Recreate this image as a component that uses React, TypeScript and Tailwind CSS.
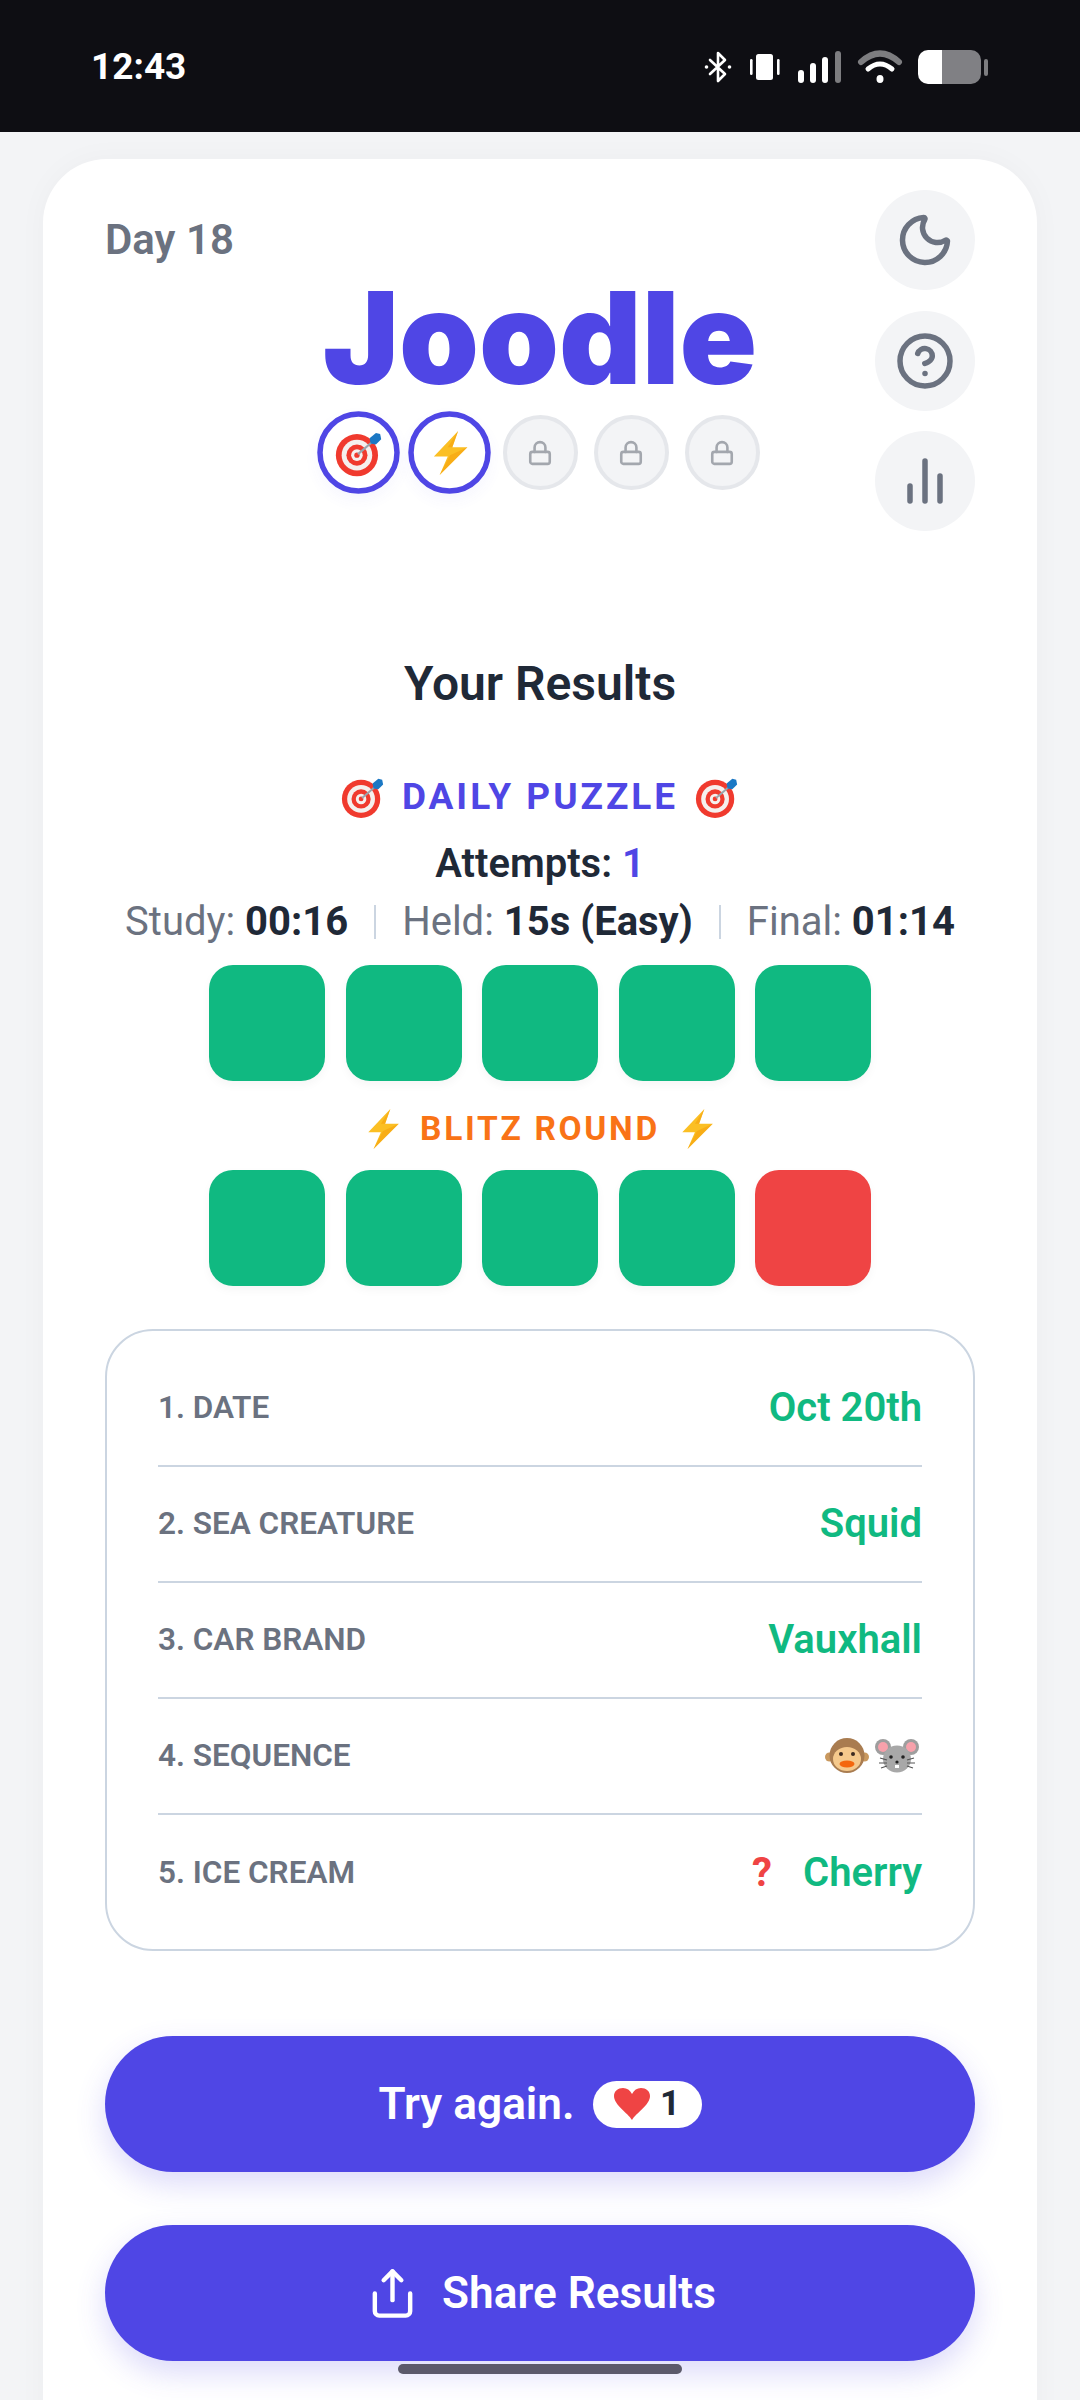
import { Moon, CircleHelp, Lock, Share } from "lucide-react";

const Target = ({ size }: { size: number }) => (
  <svg width={size} height={size} viewBox="0 0 48 48" className="shrink-0">
    <circle cx="22" cy="26" r="20" fill="#f03a2e" />
    <circle cx="22" cy="26" r="14.5" fill="#f5f0ee" />
    <circle cx="22" cy="26" r="10" fill="#f03a2e" />
    <circle cx="22" cy="26" r="5.5" fill="#f5f0ee" />
    <circle cx="22" cy="26" r="2.5" fill="#f03a2e" />
    <path d="M23 25 L37 13" stroke="#9aa5ad" strokeWidth="2" />
    <path d="M34 10 L40 5 L44 6 L45 11 L40 16 L35 15 Z" fill="#1b78c4" />
  </svg>
);

const Bolt = ({ size }: { size: number }) => (
  <svg width={size} height={size} viewBox="0 0 40 40" className="shrink-0">
    <path d="M27 1 L6 23 L18 23 L11 39 L35 15 L22 15 Z" fill="#fbbf24" />
    <path d="M27 1 L18 15 L22 15 Z M35 15 L11 39 L20 22 Z" fill="#f59e0b" opacity="0.55" />
  </svg>
);

const Monkey = () => (
  <svg width="44" height="36" viewBox="0 0 44 36">
    <circle cx="4.5" cy="19" r="4.5" fill="#c9995f" />
    <circle cx="39.5" cy="19" r="4.5" fill="#c9995f" />
    <circle cx="22" cy="17.5" r="17.5" fill="#a97c50" />
    <ellipse cx="22" cy="21" rx="14" ry="12" fill="#f5c98c" />
    <circle cx="16" cy="16" r="2" fill="#3b2a20" />
    <circle cx="28" cy="16" r="2" fill="#3b2a20" />
    <ellipse cx="22" cy="26" rx="7.5" ry="3.4" fill="#f4670e" />
  </svg>
);

const Mouse = () => (
  <svg width="44" height="36" viewBox="0 0 44 36">
    <circle cx="8" cy="9" r="8" fill="#9e9e9e" />
    <circle cx="36" cy="9" r="8" fill="#9e9e9e" />
    <circle cx="8" cy="9" r="5" fill="#f7a1ab" />
    <circle cx="36" cy="9" r="5" fill="#f7a1ab" />
    <ellipse cx="22" cy="21" rx="14" ry="13.5" fill="#a8a8a8" />
    <circle cx="16" cy="19" r="1.8" fill="#222" />
    <circle cx="28" cy="19" r="1.8" fill="#222" />
    <circle cx="22" cy="24" r="1.6" fill="#222" />
    <rect x="20" y="27" width="4" height="3" fill="#fff" />
    <path d="M12 22 L5 20 M12 25 L4 25 M12 28 L6 30 M32 22 L39 20 M32 25 L40 25 M32 28 L38 30" stroke="#555" strokeWidth="1.2" />
  </svg>
);

const StatusIcons = () => (
  <svg width="284" height="34" viewBox="0 0 284 34">
    <g fill="none" stroke="#fff" strokeWidth="2.6" strokeLinejoin="round" strokeLinecap="round">
      <path d="M6 10 L21 24 L14 31 L14 3 L21 10 L6 24" />
    </g>
    <circle cx="2.5" cy="17" r="1.8" fill="#fff" />
    <circle cx="25.5" cy="17" r="1.8" fill="#fff" />
    <rect x="52" y="4" width="17" height="26" rx="2.5" fill="#fff" />
    <rect x="46" y="9" width="2.6" height="16" rx="1.3" fill="#fff" />
    <rect x="73" y="9" width="2.6" height="16" rx="1.3" fill="#fff" />
    <rect x="94" y="20" width="6" height="13" rx="3" fill="#fff" />
    <rect x="106" y="13" width="6" height="20" rx="3" fill="#fff" />
    <rect x="118" y="7" width="6" height="26" rx="3" fill="#fff" />
    <rect x="131" y="1" width="6" height="32" rx="3" fill="#7d7d80" />
    <path d="M157 12 Q176 -5 195 12" fill="none" stroke="#7d7d80" strokeWidth="6" strokeLinecap="round" />
    <path d="M164 19 Q176 9 188 19" fill="none" stroke="#fff" strokeWidth="5" strokeLinecap="round" />
    <ellipse cx="176" cy="29" rx="3.5" ry="4" fill="#fff" />
    <path d="M238 0 h29 a10 10 0 0 1 10 10 v14 a10 10 0 0 1 -10 10 h-29 Z" fill="#808084" />
    <path d="M238 0 h-14 a10 10 0 0 0 -10 10 v14 a10 10 0 0 0 10 10 h14 Z" fill="#fff" />
    <rect x="280" y="9" width="4" height="17" rx="2" fill="#7d7d80" />
  </svg>
);

const Tile = ({ red }: { red?: boolean }) => (
  <div className={`w-[116px] h-[116px] rounded-[24px] shadow-[0_4px_10px_rgba(0,0,0,0.04)] ${red ? "bg-[#ef4444]" : "bg-[#10b981]"}`} />
);

const IconButton = ({ children }: { children: React.ReactNode }) => (
  <div className="w-[100px] h-[100px] rounded-full bg-[#f3f4f6] text-[#6b7280] flex items-center justify-center">{children}</div>
);

const LockBadge = () => (
  <div className="w-[75px] h-[75px] rounded-full bg-[#f3f4f6] border-[4px] border-[#e5e7eb] flex items-center justify-center">
    <Lock size={26} strokeWidth={2.4} className="text-[#a3a7ae]" />
  </div>
);

const ActiveBadge = ({ children }: { children: React.ReactNode }) => (
  <div className="w-[75px] h-[75px] scale-110 rounded-full bg-white border-[5px] border-[#4f46e5] shadow-[0_6px_14px_rgba(79,70,229,0.05)] flex items-center justify-center">
    {children}
  </div>
);

const Row = ({ label, children, last }: { label: string; children: React.ReactNode; last?: boolean }) => (
  <div className={`h-[116px] flex items-center justify-between ${last ? "" : "border-b-2 border-[#cbd5e1]"}`}>
    <span className="text-[31.5px] font-semibold text-[#6b7280] uppercase">{label}</span>
    <div className="flex items-center text-[40px] font-semibold text-[#10b981]">{children}</div>
  </div>
);

export default function App() {
  return (
    <div className="relative w-[1080px] h-[2400px] overflow-hidden bg-[#f3f4f6] font-['Roboto',sans-serif]">
      <header className="h-[132px] bg-[#0e0e13] flex items-center justify-between pl-[91px] pr-[92px] pt-[2px]">
        <span className="text-[37px] font-bold text-white">12:43</span>
        <StatusIcons />
      </header>

      <main className="mx-[43px] mt-[27px] h-[2300px] bg-white rounded-t-[64px] px-[62px] pt-[31px] shadow-[0_0_30px_rgba(0,0,0,0.03)]">
        <div className="grid grid-cols-[1fr_auto_1fr] h-[341px]">
          <div className="pt-[28px] text-[42px] leading-[44px] font-semibold text-[#6b7280]">Day 18</div>
          <div className="flex flex-col items-center pt-[88px]">
            <h1 className="font-['Inter',sans-serif] font-black text-[128px] leading-[120px] text-[#4f46e5]">Joodle</h1>
            <div className="flex gap-4 mt-[17px]">
              <ActiveBadge><Target size={46} /></ActiveBadge>
              <ActiveBadge><Bolt size={42} /></ActiveBadge>
              <LockBadge />
              <LockBadge />
              <LockBadge />
            </div>
          </div>
          <div className="flex flex-col items-end gap-[20.5px]">
            <IconButton><Moon size={60} strokeWidth={2.2} /></IconButton>
            <IconButton><CircleHelp size={60} strokeWidth={2.2} /></IconButton>
            <IconButton>
              <svg width="60" height="60" viewBox="0 0 24 24" fill="none" stroke="currentColor" strokeWidth="2.2" strokeLinecap="round">
                <path d="M18 20V10M12 20V4M6 20v-6" />
              </svg>
            </IconButton>
          </div>
        </div>

        <section className="flex flex-col items-center">
          <h2 className="mt-[123px] h-[60px] text-[48px] leading-[60px] font-semibold text-[#1f2937]">Your Results</h2>
          <div className="mt-[58px] h-[50px] flex items-center gap-[16px] text-[37px] font-bold tracking-[0.08em] text-[#4f46e5]">
            <Target size={46} />
            <span>DAILY PUZZLE</span>
            <Target size={46} />
          </div>
          <div className="mt-[17px] h-[50px] leading-[50px] text-[40px] font-semibold text-[#1f2937]">
            Attempts: <span className="text-[#4f46e5]">1</span>
          </div>
          <div className="mt-[8px] h-[50px] flex items-center gap-[26px] text-[40px] text-[#6b7280]">
            <span>Study: <b className="font-bold text-[#1f2937]">00:16</b></span>
            <i className="w-[2px] h-[34px] bg-[#cbd5e1]" />
            <span>Held: <b className="font-bold text-[#1f2937]">15s (Easy)</b></span>
            <i className="w-[2px] h-[34px] bg-[#cbd5e1]" />
            <span>Final: <b className="font-bold text-[#1f2937]">01:14</b></span>
          </div>
          <div className="mt-[18px] flex gap-[20.5px]">
            <Tile /><Tile /><Tile /><Tile /><Tile />
          </div>
          <div className="mt-[28px] h-[40px] flex items-center gap-[16px] text-[33.5px] font-bold tracking-[0.08em] text-[#f97316]">
            <Bolt size={42} />
            <span>BLITZ ROUND</span>
            <Bolt size={42} />
          </div>
          <div className="mt-[21px] flex gap-[20.5px]">
            <Tile /><Tile /><Tile /><Tile /><Tile red />
          </div>
        </section>

        <section className="mt-[43px] h-[622px] rounded-[48px] border-2 border-[#cbd5e1] px-[51px] pt-[20px]">
          <Row label="1. Date">Oct 20th</Row>
          <Row label="2. Sea Creature">Squid</Row>
          <Row label="3. Car Brand">Vauxhall</Row>
          <Row label="4. Sequence"><span className="flex gap-[6px] pr-[3px]"><Monkey /><Mouse /></span></Row>
          <Row label="5. Ice Cream" last>
            <span className="font-bold text-[40px] text-[#ef4444] mr-[31px]">?</span>Cherry
          </Row>
        </section>

        <div className="mt-[85px] flex flex-col gap-[53px]">
          <button className="h-[136px] rounded-full bg-[#4f46e5] shadow-[0_12px_30px_rgba(79,70,229,0.2)] flex items-center justify-center gap-[18px] text-[44.2px] font-semibold text-white">
            <span>Try again.</span>
            <span className="w-[109px] h-[47px] rounded-full bg-white flex items-center justify-center gap-[10px] text-[35px] font-bold text-[#1f2937]">
              <svg width="36" height="32" viewBox="0 0 36 32"><path d="M18 32 C14 25 0 17 0 8 C0 3 4 0 9 0 C13 0 16 2 18 6 C20 2 23 0 27 0 C32 0 36 3 36 8 C36 17 22 25 18 32 Z" fill="#ef4444" /></svg>
              1
            </span>
          </button>
          <button className="h-[136px] rounded-full bg-[#4f46e5] shadow-[0_12px_30px_rgba(79,70,229,0.2)] flex items-center justify-center gap-[23px] text-[44.2px] font-semibold text-white pl-[2px]">
            <Share size={53} strokeWidth={2} />
            <span>Share Results</span>
          </button>
        </div>
      </main>

      <div className="absolute left-[398px] top-[2364px] w-[284px] h-[10px] rounded-full bg-[#5c5a6b]" />
    </div>
  );
}
